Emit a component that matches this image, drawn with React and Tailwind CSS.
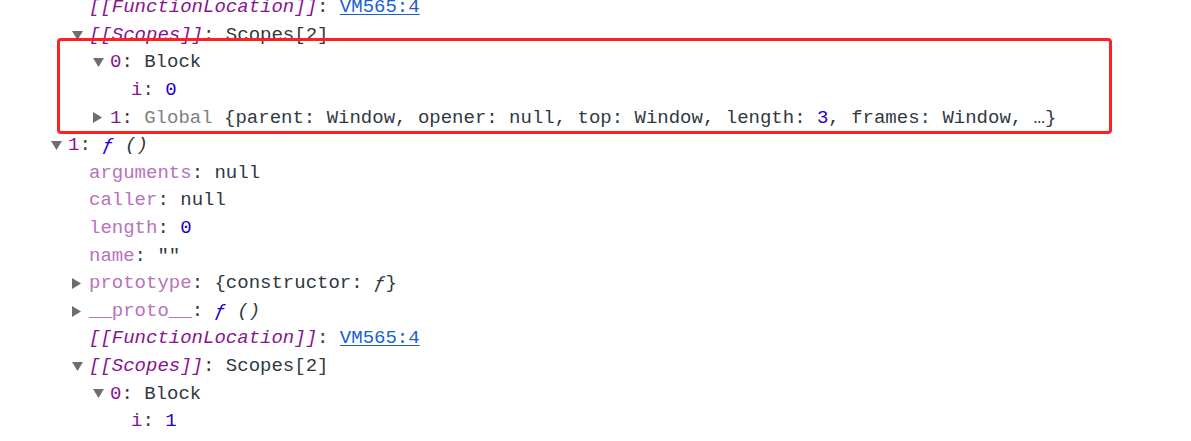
const pad = {
  1: "pl-[51px]",
  2: "pl-[72px]",
  3: "pl-[93px]",
  4: "pl-[114px]",
};

const Arrow = ({ open }) => (
  <span className="w-[17px] shrink-0 flex items-center">
    {open === undefined ? null : open ? (
      <svg width="11" height="9" viewBox="0 0 11 9">
        <path d="M0 0 L11 0 L5.5 9 Z" fill="#6e6e6e" />
      </svg>
    ) : (
      <svg width="9" height="11" viewBox="0 0 9 11">
        <path d="M0 0 L9 5.5 L0 11 Z" fill="#6e6e6e" />
      </svg>
    )}
  </span>
);

const Row = ({ level, open, children }) => (
  <div className={`flex items-center h-[27.6px] whitespace-pre ${pad[level]}`}>
    <Arrow open={open} />
    <span>{children}</span>
  </div>
);

const Key = ({ children }) => <span className="text-[#881391]">{children}</span>;
const Dim = ({ children }) => <span className="text-[#b871bd]">{children}</span>;
const Internal = ({ children }) => <span className="text-[#881391] italic">{children}</span>;
const Num = ({ children }) => <span className="text-[#1c00cf]">{children}</span>;
const Link = ({ children }) => <span className="text-[#1a5fd0] underline underline-offset-2">{children}</span>;
const Fn = () => (
  <span>
    <span className="text-[#1c00cf] italic">ƒ</span> <span className="italic">()</span>
  </span>
);

const ScopeRows = ({ idx, len }) => (
  <>
    <Row level={2}>
      <Internal>[[FunctionLocation]]</Internal>: <Link>VM565:4</Link>
    </Row>
    <Row level={2} open>
      <Internal>[[Scopes]]</Internal>: Scopes[2]
    </Row>
    <Row level={3} open>
      <Key>0</Key>: Block
    </Row>
    <Row level={4}>
      <Key>i</Key>: <Num>{idx}</Num>
    </Row>
    <Row level={3} open={false}>
      <Key>1</Key>: <span className="text-[#808080]">Global</span>{" "}
      {"{parent: Window, opener: null, top: Window, length: "}
      <Num>{len}</Num>
      {", frames: Window, …}"}
    </Row>
  </>
);

export default function App() {
  return (
    <div className="relative w-full h-[441px] overflow-hidden bg-white text-[19px] text-[#303942] font-['Liberation_Mono',monospace]">
      <div className="-mt-[6.3px]">
        <Row level={2}>
          <Internal>[[FunctionLocation]]</Internal>: <Link>VM565:4</Link>
        </Row>
        <Row level={2} open>
          <Internal>[[Scopes]]</Internal>: Scopes[2]
        </Row>
        <Row level={3} open>
          <Key>0</Key>: Block
        </Row>
        <Row level={4}>
          <Key>i</Key>: <Num>0</Num>
        </Row>
        <Row level={3} open={false}>
          <Key>1</Key>: <span className="text-[#808080]">Global</span>{" "}
          {"{parent: Window, opener: null, top: Window, length: "}
          <Num>3</Num>
          {", frames: Window, …}"}
        </Row>
        <Row level={1} open>
          <Key>1</Key>: <Fn />
        </Row>
        <Row level={2}>
          <Dim>arguments</Dim>: null
        </Row>
        <Row level={2}>
          <Dim>caller</Dim>: null
        </Row>
        <Row level={2}>
          <Dim>length</Dim>: <Num>0</Num>
        </Row>
        <Row level={2}>
          <Dim>name</Dim>: ""
        </Row>
        <Row level={2} open={false}>
          <Dim>prototype</Dim>: {"{constructor: "}
          <span className="italic">ƒ</span>
          {"}"}
        </Row>
        <Row level={2} open={false}>
          <Dim>__proto__</Dim>: <Fn />
        </Row>
        <ScopeRows idx={1} len={3} />
      </div>
      <div className="absolute left-[57px] top-[38px] w-[1055px] h-[96px] border-[3px] border-[#ff2020] rounded-[4px]" />
    </div>
  );
}
